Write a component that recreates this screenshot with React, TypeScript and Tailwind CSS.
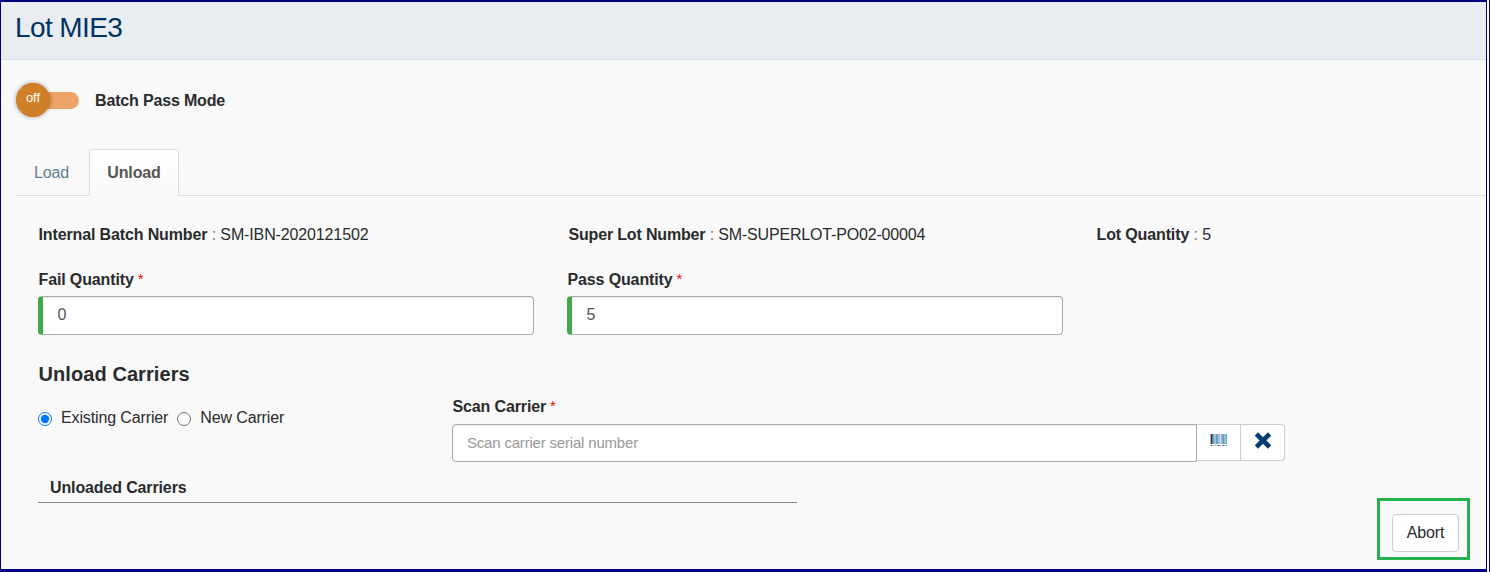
import type { ReactNode } from 'react';

function FieldLabel({ children }: { children: ReactNode }) {
  return (
    <div className="flex h-[18px] items-center gap-[5px] pl-[0.5px] font-bold leading-[18px]">
      <span>{children}</span>
      <span className="-ml-px pb-0.5 text-[15px] font-normal text-[#ff0000]">*</span>
    </div>
  );
}

function QuantityField({ label, value }: { label: string; value: string }) {
  return (
    <div className="w-[496px]">
      <FieldLabel>{label}</FieldLabel>
      <input
        defaultValue={value}
        className="mt-[7px] block h-[39px] w-full rounded border border-l-[5px] border-[#aaaaaa] border-l-[#42a948] bg-white pb-px pl-[14.5px] text-[#555555] shadow-[inset_0_1px_1px_rgba(0,0,0,0.075)] outline-none"
      />
    </div>
  );
}

function Info({ label, value }: { label: string; value: string }) {
  return (
    <div className="whitespace-nowrap pl-[0.5px] leading-[18px]">
      <b>{label}</b> <span className="text-[#777777]">:</span> {value}
    </div>
  );
}

function Radio({ checked, label }: { checked?: boolean; label: string }) {
  return (
    <label className="flex h-5 items-center gap-[9px]">
      <input type="radio" name="carrier" defaultChecked={checked} className="mt-px h-[14px] w-[14px]" />
      <span className="leading-5">{label}</span>
    </label>
  );
}

function Barcode() {
  return (
    <svg width="17" height="12" viewBox="0 0 17 12" shapeRendering="crispEdges">
      <path d="M0 0h17v10H0z" fill="#86c3e8" />
      <path d="M0 0h1v10H0z" fill="#e8a468" />
      <path d="M1 0h1v10H1z" fill="#173152" />
      <path d="M2 0h1v10H2z" fill="#468cae" />
      <path d="M3 0h1v10H3zM7 0h1v10H7zM12 0h1v10h-1zM16 0h1v10h-1z" fill="#45b4ef" />
      <path d="M5 0h1v10H5zM9 0h1v10H9zM14 0h1v10h-1z" fill="#d8ad98" />
      <path d="M6 0h1v10H6zM13 0h1v10h-1z" fill="#7995bb" />
      <path d="M10 0h1v10h-1z" fill="#eed4df" />
      <path d="M0 11h1v1H0zM4 11h2v1H4zM12 11h1v1h-1z" fill="#d8ad83" />
      <path d="M1 11h1v1H1zM8 11h1v1H8zM13 11h1v1h-1z" fill="#28465f" />
      <path d="M3 11h1v1H3zM6 11h2v1H6zM9 11h3v1H9zM14 11h3v1h-3z" fill="#8ebedb" />
    </svg>
  );
}

export default function App() {
  return (
    <div className="flex h-[572px] w-[1490px] border-r border-[#000080] bg-white pr-[2px] font-['Liberation_Sans',Arial,sans-serif] text-base tracking-[-0.13px] text-[#292b2c]">
      <main className="flex h-[572px] w-[1487px] flex-col border-b-[3px] border-l border-r border-t-2 border-[#000080] bg-[#f9f9f9]">
        <header className="h-[58px] border-b border-[#d9dee9] bg-[#e9ecf1] pl-[14px]">
          <h1 className="pt-[9px] text-[28px] leading-[34px] tracking-[-0.6px] text-[#003462]">Lot MIE3</h1>
        </header>

        <div className="flex h-[89px] items-start pl-[15px] pt-[23px]">
          <div className="flex h-[34px] w-[63px] items-center">
            <div className="z-10 flex h-[34px] w-[34px] shrink-0 justify-center rounded-full bg-[#d07e27] pt-[6px] text-[13px] leading-[18px] tracking-normal text-white shadow-[0_0_4px_rgba(0,0,0,0.4)]">off</div>
            <div className="-ml-4 h-[17px] w-[45px] rounded-r-full bg-[#eea366]" />
          </div>
          <b className="ml-4 leading-[35px] tracking-[-0.16px]">Batch Pass Mode</b>
        </div>

        <nav className="ml-[15px] flex h-[47px] items-stretch">
          <div className="w-[73px] border-b border-[#dddddd] pl-[18px] leading-[47px] text-[#5d7d8e]">Load</div>
          <div className="w-[90px] rounded-t border border-b-0 border-[#dddddd] bg-linear-to-b from-white to-[#f9f9f9] text-center font-bold leading-[45px] text-[#555555]">Unload</div>
          <div className="flex-1 border-b border-[#dddddd]" />
        </nav>

        <section className="flex pl-[37px] pt-[30px]">
          <div className="w-[530px]"><Info label="Internal Batch Number" value="SM-IBN-2020121502" /></div>
          <div className="w-[528px] tracking-[-0.17px]"><Info label="Super Lot Number" value="SM-SUPERLOT-PO02-00004" /></div>
          <Info label="Lot Quantity" value="5" />
        </section>

        <section className="flex gap-[33px] pl-[37px] pt-[27px]">
          <QuantityField label="Fail Quantity" value="0" />
          <QuantityField label="Pass Quantity" value="5" />
        </section>

        <h2 className="mt-[27px] pl-[37.5px] text-xl font-bold leading-6 tracking-[0.08px]">Unload Carriers</h2>

        <section className="flex h-[93px] pl-[37px] pt-3">
          <div className="flex w-[414px] gap-[9px] pt-[10px]">
            <Radio checked label="Existing Carrier" />
            <Radio label="New Carrier" />
          </div>
          <div>
            <FieldLabel>Scan Carrier</FieldLabel>
            <div className="mt-2 flex">
              <input
                placeholder="Scan carrier serial number"
                className="h-[38px] w-[745px] rounded-l border border-[#aaaaaa] bg-white pb-px pl-[14px] text-[15px] tracking-[-0.19px] shadow-[inset_0_1px_1px_rgba(0,0,0,0.075)] outline-none placeholder:text-[#999999]"
              />
              <button className="flex h-[37px] w-[44px] justify-center border border-l-0 border-[#cccccc] bg-white pt-[9px]"><Barcode /></button>
              <button className="flex h-[37px] w-[44px] justify-center rounded-r border border-l-0 border-[#cccccc] bg-white pt-[7px]">
                <svg width="18" height="17" viewBox="0 0 18 17"><path d="M2.4 2 15.6 15M15.6 2 2.4 15" stroke="#003d70" strokeWidth="4.6" /></svg>
              </button>
            </div>
          </div>
        </section>

        <div className="flex items-start">
          <div className="ml-[37px] h-[24px] w-[759px] border-b border-[#888888] pl-3 font-bold leading-[18px]">Unloaded Carriers</div>
          <div className="ml-auto mr-4 mt-[19px] border-[3px] border-[#22b14c] p-[13px] pb-[5px] pl-3 pr-2">
            <button className="block h-[38px] w-[67px] rounded border border-[#cccccc] bg-white">Abort</button>
          </div>
        </div>
      </main>
    </div>
  );
}
